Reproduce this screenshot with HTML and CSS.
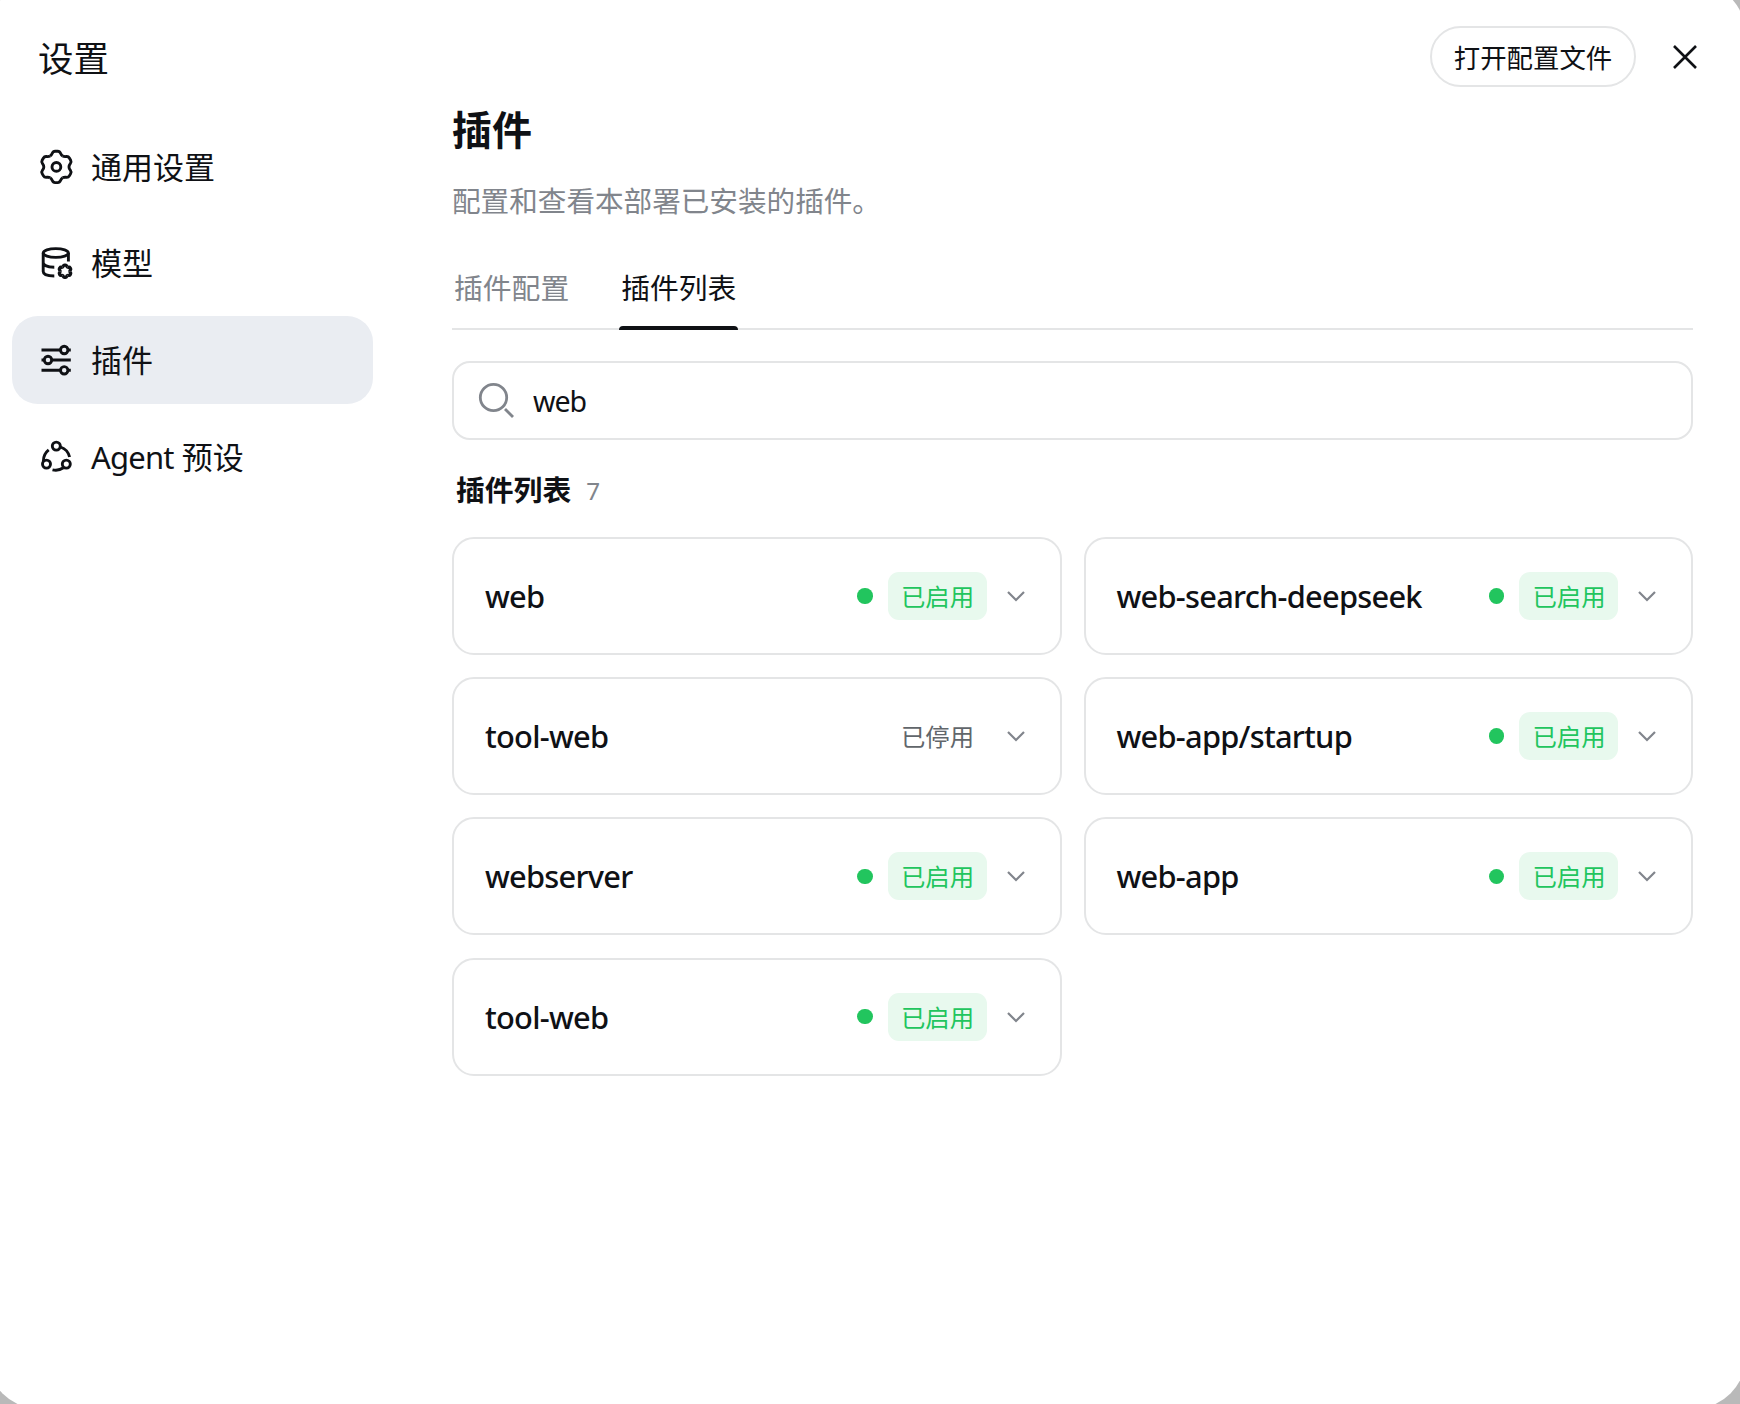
FILE: index.html
```
<!DOCTYPE html>
<html lang="zh-CN">
<head>
<meta charset="UTF-8">
<meta name="viewport" content="width=device-width, initial-scale=1.0">
<title>设置</title>
<link rel="stylesheet" href="styles.css">
</head>
<body>
<div class="dialog">
    <aside class="sidebar">
        <h1 class="sidebar-title">设置</h1>
        <nav class="nav">
            <a class="nav-item">
                <svg class="nav-icon" viewBox="0 0 36 36">
                    <defs>
                        <path id="tooth" d="M-6.300 -10.900C-3.200 -12.700 -4.900 -15.700 -1.300 -15.700H1.300C4.900 -15.700 3.200 -12.700 6.300 -10.900"/>
                        <g id="gear">
                            <use href="#tooth"/>
                            <use href="#tooth" transform="rotate(60)"/>
                            <use href="#tooth" transform="rotate(120)"/>
                            <use href="#tooth" transform="rotate(180)"/>
                            <use href="#tooth" transform="rotate(240)"/>
                            <use href="#tooth" transform="rotate(300)"/>
                        </g>
                    </defs>
                    <use href="#gear" x="18.4" y="17.9"/>
                    <circle cx="18.4" cy="17.9" r="4.4"/>
                </svg>
                <span>通用设置</span>
            </a>
            <a class="nav-item">
                <svg class="nav-icon" viewBox="0 0 36 36">
                    <ellipse cx="17.800" cy="8" rx="12.600" ry="4.400"/>
                    <path d="M5.200 8V26.500C5.200 29.200 9.500 31 16.300 31M5.200 17.500C5.200 20.300 9.500 22.200 16.300 22.200M30.400 8V16.500"/>
                    <use href="#gear" class="small-gear" transform="translate(27 26.300) scale(.39)"/>
                </svg>
                <span>模型</span>
            </a>
            <a class="nav-item active">
                <svg class="nav-icon" viewBox="0 0 36 36">
                    <path d="M3.500 8H22.500M30 8h2.800M3.500 18H6M14 18H32.800M3.500 28.300H22.500M30 28.300h2.800"/>
                    <circle cx="26.200" cy="8" r="3.700"/>
                    <circle cx="10" cy="18" r="3.700"/>
                    <circle cx="26.200" cy="28.300" r="3.700"/>
                </svg>
                <span>插件</span>
            </a>
            <a class="nav-item">
                <svg class="nav-icon" viewBox="0 0 36 36">
                    <circle cx="18.300" cy="7.100" r="4"/>
                    <circle cx="8.500" cy="25.100" r="4"/>
                    <circle cx="28.300" cy="25.100" r="4"/>
                    <path d="M10.700 10.900A14 14 0 0 0 5.400 22M22.500 8A14 14 0 0 1 31.600 18M14.500 30.800A14 14 0 0 0 25.500 28.800"/>
                </svg>
                <span><span class="latin">Agent</span> 预设</span>
            </a>
        </nav>
    </aside>
    <main class="main">
        <div class="toolbar">
            <button class="open-config">打开配置文件</button>
            <button class="close" aria-label="关闭">
                <svg viewBox="0 0 24 24"><path d="M1 1L23 23M23 1L1 23"/></svg>
            </button>
        </div>
        <h2 class="page-title">插件</h2>
        <p class="page-desc">配置和查看本部署已安装的插件。</p>
        <div class="tabs">
            <button class="tab">插件配置</button>
            <button class="tab active">插件列表</button>
        </div>
        <label class="search">
            <svg viewBox="0 0 36 36"><circle cx="15.500" cy="15.500" r="13.200"/><path d="M27 27L35 35"/></svg>
            <input type="text" value="web">
        </label>
        <div class="list-head">
            <h3>插件列表</h3>
            <span class="count">7</span>
        </div>
        <div class="plugin-grid">
            <div class="plugin"><span class="name">web</span><i class="dot"></i><span class="badge on">已启用</span><svg class="chevron" viewBox="0 0 20 12"><path d="M2 2L10 10L18 2"/></svg></div>
            <div class="plugin"><span class="name">web-search-deepseek</span><i class="dot"></i><span class="badge on">已启用</span><svg class="chevron" viewBox="0 0 20 12"><path d="M2 2L10 10L18 2"/></svg></div>
            <div class="plugin"><span class="name">tool-web</span><span class="badge">已停用</span><svg class="chevron" viewBox="0 0 20 12"><path d="M2 2L10 10L18 2"/></svg></div>
            <div class="plugin"><span class="name">web-app/startup</span><i class="dot"></i><span class="badge on">已启用</span><svg class="chevron" viewBox="0 0 20 12"><path d="M2 2L10 10L18 2"/></svg></div>
            <div class="plugin"><span class="name">webserver</span><i class="dot"></i><span class="badge on">已启用</span><svg class="chevron" viewBox="0 0 20 12"><path d="M2 2L10 10L18 2"/></svg></div>
            <div class="plugin"><span class="name">web-app</span><i class="dot"></i><span class="badge on">已启用</span><svg class="chevron" viewBox="0 0 20 12"><path d="M2 2L10 10L18 2"/></svg></div>
            <div class="plugin"><span class="name">tool-web</span><i class="dot"></i><span class="badge on">已启用</span><svg class="chevron" viewBox="0 0 20 12"><path d="M2 2L10 10L18 2"/></svg></div>
        </div>
    </main>
</div>
</body>
</html>
```
FILE: styles.css
```
* {
    box-sizing: border-box;
}

body {
    margin: 0;
    height: 1404px;
    overflow: hidden;
    background-color: #b9b9b9;
    color: #0f1115;
    font-family: "Noto Sans", "Noto Sans CJK SC", sans-serif;
}

h1, h2, h3, p {
    margin: 0;
}

button, input {
    font-family: inherit;
    color: inherit;
    background: none;
    border: none;
    padding: 0;
}

svg {
    display: block;
    flex: none;
    fill: none;
    stroke: currentColor;
}

/* the dialog runs a little past every edge of the window */
.dialog {
    display: flex;
    width: 1759px;
    height: 1427px;
    margin: -18px 0 0 -13px;
    padding-top: 18px;
    border-radius: 53px;
    background-color: #fff;
    overflow: hidden;
}

.sidebar {
    width: 361px;
    margin-left: 25px;
    flex: none;
}

.sidebar-title {
    height: 122.5px;
    padding: 34px 0 0 26px;
    font-size: 35.5px;
    font-weight: 400;
    line-height: 48px;
}

.nav {
    display: flex;
    flex-direction: column;
    gap: 8.8px;
}

.nav-item {
    display: flex;
    align-items: center;
    gap: 17px;
    height: 88px;
    padding-left: 26px;
    border-radius: 26px;
    font-size: 31px;
    line-height: 44px;
}

.nav-item.active {
    background-color: #eaedf2;
}

.nav-icon {
    width: 36px;
    height: 36px;
    stroke-width: 2.9;
    overflow: visible;
}

.small-gear {
    stroke-width: 8.5;
}

.latin {
    letter-spacing: -0.8px;
}

.main {
    width: 1241px;
    margin-left: 79px;
}

.toolbar {
    display: flex;
    justify-content: flex-end;
    align-items: center;
    gap: 37px;
    height: 61px;
    margin: 26px -4px 0 0;
}

.open-config {
    width: 206px;
    height: 61px;
    border: 2px solid #e4e5e6;
    border-radius: 31px;
    font-size: 26.4px;
}

.close svg {
    width: 24px;
    height: 24px;
    stroke-width: 2.6;
}

.page-title {
    margin-top: 16px;
    font-size: 40px;
    font-weight: 700;
    line-height: 54px;
}

.page-desc {
    margin-top: 23px;
    color: #81858c;
    font-size: 28.6px;
    line-height: 42px;
}

.tabs {
    display: flex;
    gap: 48px;
    height: 80px;
    margin-top: 28px;
    border-bottom: 2px solid #e4e5e6;
}

.tab {
    position: relative;
    height: 80px;
    padding: 0 2px 5px;
    color: #81858c;
    font-size: 28.8px;
    line-height: 75px;
}

.tab.active {
    color: #0f1115;
}

.tab.active::after {
    content: "";
    position: absolute;
    left: 0;
    right: 0;
    bottom: 0;
    height: 4px;
    border-radius: 4px 4px 0 0;
    background-color: #0f1115;
}

.search {
    display: flex;
    align-items: center;
    gap: 19px;
    height: 79px;
    margin-top: 31px;
    padding: 0 24px;
    border: 2px solid #e4e5e6;
    border-radius: 18px;
}

.search svg {
    width: 36px;
    height: 36px;
    margin-bottom: 2px;
    color: #81858c;
    stroke-width: 2.8;
}

.search input {
    flex: 1;
    font-size: 28.6px;
    letter-spacing: -1px;
    outline: none;
}

.list-head {
    display: flex;
    align-items: center;
    gap: 15px;
    height: 42px;
    margin: 29px 0 26px 4px;
}

.list-head h3 {
    font-size: 28.8px;
    font-weight: 700;
    line-height: 42px;
}

.count {
    color: #81858c;
    font-size: 24.2px;
}

.plugin-grid {
    display: grid;
    grid-template-columns: 1fr 1fr;
    gap: 22.2px 22px;
}

.plugin {
    display: flex;
    align-items: center;
    height: 118px;
    padding: 0 34px 0 31px;
    border: 2px solid #e4e5e6;
    border-radius: 22px;
}

.name {
    flex: 1;
    font-size: 30.8px;
    font-weight: 500;
    letter-spacing: -0.75px;
}

.dot {
    width: 15.4px;
    height: 15.4px;
    margin-right: 15px;
    border-radius: 50%;
    background-color: #22c55e;
}

.badge {
    width: 99px;
    height: 48px;
    padding-left: 1px;
    border-radius: 11px;
    color: #61666b;
    font-size: 24.4px;
    line-height: 49px;
    text-align: center;
}

.badge.on {
    background-color: #e8f9ee;
    color: #22c55e;
}

.chevron {
    width: 20px;
    height: 12px;
    margin-left: 19px;
    color: #81858c;
    stroke-width: 2.2;
}
```
